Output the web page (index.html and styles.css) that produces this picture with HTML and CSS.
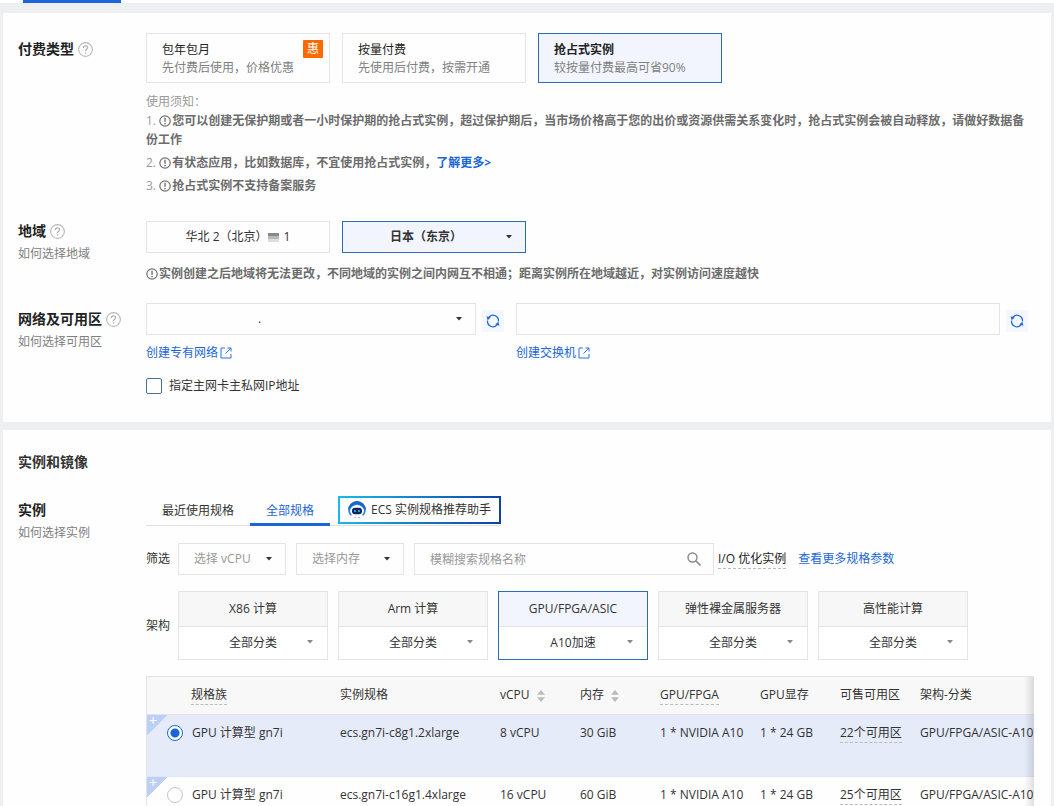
FILE: index.html
```html
<!DOCTYPE html>
<html lang="zh-CN">
<head>
<meta charset="utf-8">
<meta name="viewport" content="width=device-width, initial-scale=1">
<title>云服务器购买</title>
<link rel="stylesheet" href="styles.css">
</head>
<body>
<svg class="defs" width="0" height="0" aria-hidden="true">
  <symbol id="i-help" viewBox="0 0 14 14"><circle cx="7" cy="7" r="6.4" fill="none" stroke="#b9b9b9"/><path d="M5 5.6C5 4.3 5.8 3.6 7 3.6s2 .8 2 1.8c0 1.300-2 1.500-2 3" fill="none" stroke="#b0b0b0" stroke-width="1.100"/><circle cx="7" cy="10.300" r=".7" fill="#b0b0b0"/></symbol>
  <symbol id="i-warn" viewBox="0 0 14 14"><circle cx="6.500" cy="7" r="5.600" fill="none" stroke="#707070" stroke-width="1.300"/><path d="M6.500 3.600v4.200" stroke="#707070" stroke-width="1.500"/><circle cx="6.500" cy="9.800" r=".9" fill="#707070"/></symbol>
  <symbol id="i-ext" viewBox="0 0 12 12"><path d="M5 1H1v10h10V7M7.500 1H11v3.500M11 1L5.500 6.500" fill="none" stroke="#2a72dd"/></symbol>
  <symbol id="i-refresh" viewBox="0 0 14 14"><path d="M3 3.100A5.400 5.400 0 0 1 12.400 7.500M11 10.900A5.400 5.400 0 0 1 1.600 6.500" fill="none" stroke="#2068dc" stroke-width="1.200"/><path d="M.6 2.200l1 4 3.200-2.600zM13.400 11.800l-1-4-3.200 2.600z" fill="#2068dc"/></symbol>
  <symbol id="i-caret" viewBox="0 0 6 4"><path d="M0 0h6L3 3.600z" fill="currentColor"/></symbol>
  <symbol id="i-sort" viewBox="0 0 8 12"><path d="M4 0l4 4.700H0zM4 12l4-4.700H0z" fill="#bbb"/></symbol>
</svg>
<div class="page">
  <nav class="topbar"><span class="topbar-active"></span></nav>

  <section class="card card-basic">
    <div class="row row-pay">
      <div class="label"><h3>付费类型<svg class="help"><use href="#i-help"/></svg></h3></div>
      <div class="field">
        <div class="options">
          <button class="pay" type="button"><span class="pay-name">包年包月</span><span class="pay-desc">先付费后使用，价格优惠</span><span class="tag">惠</span></button>
          <button class="pay" type="button"><span class="pay-name">按量付费</span><span class="pay-desc">先使用后付费，按需开通</span></button>
          <button class="pay selected" type="button"><span class="pay-name">抢占式实例</span><span class="pay-desc">较按量付费最高可省90%</span></button>
        </div>
        <div class="notes">
          <p>使用须知：</p>
          <p>1. <svg class="warn"><use href="#i-warn"/></svg><b>您可以创建无保护期或者一小时保护期的抢占式实例，超过保护期后，当市场价格高于您的出价或资源供需关系变化时，抢占式实例会被自动释放，请做好数据备份工作</b></p>
          <p>2. <svg class="warn"><use href="#i-warn"/></svg><b>有状态应用，比如数据库，不宜使用抢占式实例，<a href="#">了解更多&gt;</a></b></p>
          <p>3. <svg class="warn"><use href="#i-warn"/></svg><b>抢占式实例不支持备案服务</b></p>
        </div>
      </div>
    </div>

    <div class="row row-region">
      <div class="label"><h3>地域<svg class="help"><use href="#i-help"/></svg></h3><p>如何选择地域</p></div>
      <div class="field">
        <div class="options">
          <button class="region" type="button">华北 2（北京）<i class="server"></i>1</button>
          <div class="select region-select selected"><select aria-label="地域"><option>日本（东京）</option></select><svg class="caret"><use href="#i-caret"/></svg></div>
        </div>
        <p class="hint"><svg class="warn"><use href="#i-warn"/></svg><b>实例创建之后地域将无法更改，不同地域的实例之间内网互不相通；距离实例所在地域越近，对实例访问速度越快</b></p>
      </div>
    </div>

    <div class="row row-network">
      <div class="label"><h3>网络及可用区<svg class="help"><use href="#i-help"/></svg></h3><p>如何选择可用区</p></div>
      <div class="field">
        <div class="networks">
          <div class="vpc">
            <div class="picker"><div class="select"><select aria-label="专有网络"><option>.</option></select><svg class="caret"><use href="#i-caret"/></svg></div>
            <button class="refresh" type="button" aria-label="刷新专有网络"><svg><use href="#i-refresh"/></svg></button></div>
            <a href="#">创建专有网络<svg class="ext"><use href="#i-ext"/></svg></a>
          </div>
          <div class="vswitch">
            <div class="picker"><div class="select"><select aria-label="交换机"><option></option></select></div>
            <button class="refresh" type="button" aria-label="刷新交换机"><svg><use href="#i-refresh"/></svg></button></div>
            <a href="#">创建交换机<svg class="ext"><use href="#i-ext"/></svg></a>
          </div>
        </div>
        <label class="check"><input type="checkbox">指定主网卡主私网IP地址</label>
      </div>
    </div>
  </section>

  <section class="card card-instance">
    <h2>实例和镜像</h2>
    <div class="row row-instance">
      <div class="label"><h3>实例</h3><p>如何选择实例</p></div>
      <div class="field">
        <div class="tabs">
          <button class="tab" type="button">最近使用规格</button>
          <button class="tab active" type="button">全部规格</button>
          <button class="assistant" type="button">
            <svg viewBox="0 0 18 18"><circle cx="9" cy="9" r="8.800" fill="#2a83e0"/><path d="M9 0a9 9 0 0 0-8.800 9L3 6.500A7 7 0 0 1 15 6.500L17.800 9A9 9 0 0 0 9 0z" fill="#1766c9"/><ellipse cx="9" cy="10" rx="6.900" ry="6" fill="#fff"/><path d="M2 15c2-2 12-2 14 0l-2 3H4z" fill="#f7fbff"/><rect x="4" y="6.700" width="10" height="6.500" rx="3" fill="#07275c"/><circle cx="7" cy="10" r="1" fill="#43baff"/><circle cx="11" cy="10" r="1" fill="#43baff"/><path d="M6 16.500h2M10 16.500h2" stroke="#9cc4ee"/></svg>
            ECS 实例规格推荐助手</button>
        </div>
        <div class="filters">
          <span class="tag-label">筛选</span>
          <div class="select filter"><select aria-label="选择 vCPU"><option>选择 vCPU</option></select><svg class="caret"><use href="#i-caret"/></svg></div>
          <div class="select filter"><select aria-label="选择内存"><option>选择内存</option></select><svg class="caret"><use href="#i-caret"/></svg></div>
          <div class="search"><input type="text" placeholder="模糊搜索规格名称" aria-label="模糊搜索规格名称"><svg viewBox="0 0 14 14"><circle cx="5.500" cy="5.500" r="4.500" fill="none" stroke="#888" stroke-width="1.400"/><path d="M9 9l4.500 4.500" stroke="#888" stroke-width="1.600"/></svg></div>
          <span class="io">I/O 优化实例</span>
          <a href="#">查看更多规格参数</a>
        </div>
        <div class="archs">
          <span class="tag-label">架构</span>
          <div class="arch"><button type="button">X86 计算</button><div class="select"><select aria-label="X86 计算分类"><option>全部分类</option></select><svg class="caret"><use href="#i-caret"/></svg></div></div>
          <div class="arch"><button type="button">Arm 计算</button><div class="select"><select aria-label="Arm 计算分类"><option>全部分类</option></select><svg class="caret"><use href="#i-caret"/></svg></div></div>
          <div class="arch selected"><button type="button">GPU/FPGA/ASIC</button><div class="select"><select aria-label="GPU/FPGA/ASIC 分类"><option>A10加速</option></select><svg class="caret"><use href="#i-caret"/></svg></div></div>
          <div class="arch"><button type="button">弹性裸金属服务器</button><div class="select"><select aria-label="弹性裸金属服务器分类"><option>全部分类</option></select><svg class="caret"><use href="#i-caret"/></svg></div></div>
          <div class="arch"><button type="button">高性能计算</button><div class="select"><select aria-label="高性能计算分类"><option>全部分类</option></select><svg class="caret"><use href="#i-caret"/></svg></div></div>
        </div>
        <div class="table-wrap">
          <table>
            <colgroup><col class="c-family"><col class="c-spec"><col class="c-s"><col class="c-s"><col class="c-gpu"><col class="c-s"><col class="c-s"><col class="c-arch"></colgroup>
            <thead><tr><th><span class="dash">规格族</span></th><th>实例规格</th><th>vCPU<svg class="sort"><use href="#i-sort"/></svg></th><th>内存<svg class="sort"><use href="#i-sort"/></svg></th><th><span class="dash">GPU/FPGA</span></th><th>GPU显存</th><th>可售可用区</th><th>架构-分类</th></tr></thead>
            <tbody>
              <tr class="checked"><td><span class="corner">+</span><label class="radio"><input type="radio" name="spec" checked>GPU 计算型 gn7i</label></td><td>ecs.gn7i-c8g1.2xlarge</td><td>8 vCPU</td><td>30 GiB</td><td>1 * NVIDIA A10</td><td>1 * 24 GB</td><td><span class="dash">22个可用区</span></td><td>GPU/FPGA/ASIC-A10加速</td></tr>
              <tr><td><span class="corner">+</span><label class="radio"><input type="radio" name="spec">GPU 计算型 gn7i</label></td><td>ecs.gn7i-c16g1.4xlarge</td><td>16 vCPU</td><td>60 GiB</td><td>1 * NVIDIA A10</td><td>1 * 24 GB</td><td><span class="dash">25个可用区</span></td><td>GPU/FPGA/ASIC-A10加速</td></tr>
            </tbody>
          </table>
        </div>
      </div>
    </div>
  </section>
</div>
</body>
</html>
```

FILE: styles.css
```css
* { box-sizing: border-box; }
body, h2, h3, p { margin: 0; }
body { background: #edeff1; color: #333; font: 12px/18px "Open Sans", "Noto Sans CJK SC", sans-serif; }
button, input, select { margin: 0; padding: 0; border: 0; border-radius: 0; background: none; color: inherit; font: inherit; }
a { color: #1a66d8; text-decoration: none; }
svg { display: block; flex: none; }
.defs { position: absolute; }
.page { height: 100vh; overflow: auto; scrollbar-width: none; }

.topbar { height: 3px; padding-left: 23px; background: #fff; }
.topbar-active { display: block; width: 98px; height: 3px; background: #1a66d8; }

.card { margin: 0 3px; background: #fefefe; }
.card-basic { margin-top: 10px; padding: 20px 17px 27px 15px; }
.card-instance { margin-top: 8px; padding: 22px 17px 0 15px; }
h2 { font-size: 14px; line-height: 20px; font-weight: 700; }

.row { display: flex; }
.label { flex: none; width: 128px; }
.field { flex: 1; min-width: 0; }
h3 { display: flex; align-items: center; gap: 4px; font-size: 14px; line-height: 20px; color: #222; }
.label p { margin-top: 4px; line-height: 18px; color: #808080; }
.help { width: 15px; height: 15px; }
.row-pay h3 { margin-top: 6px; }
.row-region { margin-top: 26px; }
.row-network { margin-top: 20px; }
.row-network .label { padding-top: 6px; }
.row-instance { margin-top: 24px; }
.row-instance .label { padding-top: 4px; }

.options { display: flex; gap: 12px; }
.pay { position: relative; display: flex; flex-direction: column; justify-content: center; width: 184px; height: 50px; padding: 2px 15px 0; border: 1px solid #e3e4e6; text-align: left; }
.pay-name { color: #222; }
.pay-desc { color: #808080; }
.selected { border-color: #2a6db5; background: #f2f5fe; }
.pay.selected .pay-name { font-weight: 700; }
.tag { position: absolute; top: 6px; right: 6px; width: 20px; height: 18px; border-radius: 1px; background: #ff6a00; color: #fff; text-align: center; }
.notes { margin-top: 10px; color: #999; line-height: 19px; }
.notes p + p { margin-top: 4px; }
.notes p:first-child { line-height: 18px; }
.notes p:nth-child(2) { margin-top: 0; }
.notes b, .hint b { color: #6c6c6c; }
.notes p { word-break: break-all; }
.warn { display: inline-block; width: 13px; height: 14px; vertical-align: -3px; }

.select { position: relative; display: flex; border: 1px solid #e3e4e6; }
.select select { appearance: none; width: 100%; height: 30px; }
.caret { position: absolute; top: 13px; right: 13px; width: 6px; height: 4px; pointer-events: none; }
.region { display: flex; align-items: center; justify-content: center; width: 184px; height: 32px; border: 1px solid #e3e4e6; }
.server { width: 11px; height: 9px; margin-right: 5px; background: linear-gradient(#8a8a8a 33%, #b8b8b8 33% 66%, #dedede 66%); }
.region-select { width: 184px; border-color: #2a6db5; }
.region-select select { padding-right: 16px; text-align-last: center; font-weight: 700; }
.hint { margin-top: 12px; }

.networks { display: flex; gap: 12px; }
.vpc { flex: 0 1 358px; }
.vswitch { flex: 1; }
.picker { display: flex; align-items: center; gap: 6px; }
.picker .select { flex: 1; }
.picker select { padding-left: 111px; }
.vswitch { padding-right: 6px; }
.refresh { display: flex; align-items: center; justify-content: center; width: 22px; height: 22px; margin-top: 4px; background: #f5f7fe; }
.refresh svg { width: 14px; height: 14px; }
.networks a { display: flex; align-items: center; gap: 2px; width: max-content; margin-top: 9px; line-height: 18px; }
.ext { width: 12px; height: 12px; }
.check { display: flex; align-items: center; gap: 7px; width: max-content; margin-top: 15px; }
.check input { appearance: none; width: 16px; height: 16px; border: 1px solid #4a719f; border-radius: 2px; background: #fff; }

.tabs { display: flex; align-items: flex-start; width: max-content; border-bottom: 1px solid #dedfe2; }
.tab { height: 30px; margin-bottom: -1px; padding: 2px 16px 0; border-bottom: 3px solid transparent; }
.tab.active { border-color: #1a66d8; color: #1a66d8; }
.assistant { display: flex; align-items: center; gap: 5px; height: 28px; margin-left: 8px; padding: 0 8px; border: 2px solid; border-image: linear-gradient(100deg, #1cb9ea, #0d3fa5) 1; }
.assistant svg { width: 18px; height: 18px; }
.filters { display: flex; align-items: center; margin-top: 17px; }
.tag-label { flex: none; width: 32px; }
.filter { width: 108px; margin-right: 10px; }
.filter select { padding-left: 15px; color: #999; }
.filter .caret { color: #333; }
.search { position: relative; flex: 0 1 300px; height: 32px; border: 1px solid #e3e4e6; }
.search input { width: 100%; height: 30px; padding: 0 40px 0 15px; }
.search input::placeholder { color: #999; opacity: 1; }
.search svg { position: absolute; top: 8px; right: 12px; width: 14px; height: 14px; }
.io { margin-left: 4px; border-bottom: 1px dashed #bbb; color: #222; }
.filters a { margin-left: 12px; }
.archs { display: flex; align-items: center; margin-top: 16px; }
.arch { width: 150px; margin-right: 10px; border: 1px solid #e3e4e6; background: #fff; }
.arch button { display: block; width: 100%; height: 35px; border-bottom: 1px solid #e3e4e6; background: #f7f7f7; }
.arch .select { border: 0; }
.arch select { height: 32px; text-align-last: center; }
.arch .caret { right: 14px; color: #888; }
.arch.selected { border-color: #2a6db5; }
.arch.selected button { background: #f2f5fe; }

.table-wrap { position: relative; margin-top: 16px; overflow: hidden; border: 1px solid #e3e4e6; border-width: 1px 0 0 1px; }
.table-wrap::after { content: ""; position: absolute; inset: 0 0 0 auto; width: 10px; background: linear-gradient(to right, transparent, rgba(0, 0, 0, .12)); }
table { width: 917px; border-collapse: collapse; table-layout: fixed; }
.c-family { width: 177px; }
.c-spec { width: 160px; }
.c-s { width: 80px; }
.c-gpu { width: 100px; }
th, td { padding: 0 0 0 16px; text-align: left; white-space: nowrap; }
th { height: 37px; border-bottom: 1px solid #e3e4e6; background: #f8f8f8; font-weight: 400; }
th:first-child { padding-left: 44px; }
td { position: relative; height: 62px; padding-top: 9px; vertical-align: top; border-bottom: 1px solid #dfe5f3; }
.checked td { background: #e5ebf9; }
.dash { display: inline-block; border-bottom: 1px dashed #bbb; }
.sort { display: inline-block; width: 8px; height: 12px; margin-left: 7px; vertical-align: -3px; }
.radio { display: flex; align-items: center; gap: 9px; margin-left: 4px; }
.radio input { appearance: none; width: 16px; height: 16px; border: 1px solid #c4c6cc; border-radius: 50%; background: #fff; }
.radio input:checked { border-color: #1a66d8; background: radial-gradient(circle, #1a66d8 4px, #fff 5px); }
.corner { position: absolute; top: 0; left: 0; width: 20px; height: 21px; padding-left: 2px; background: linear-gradient(135deg, #bcd0f7 50%, transparent 50%); color: #fff; font-size: 14px; line-height: 12px; }
```
